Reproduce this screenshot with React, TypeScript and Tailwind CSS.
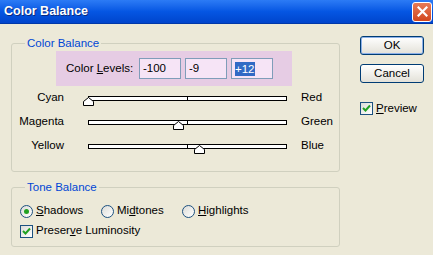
import React from "react";

const sliders = [
  { left: "Cyan", right: "Red", value: -100 },
  { left: "Magenta", right: "Green", value: -9 },
  { left: "Yellow", right: "Blue", value: 12 },
];

function Slider({ left, right, value }: { left: string; right: string; value: number }) {
  // track is 199px wide, 0 sits at the middle tick
  const pos = Math.round(((value + 100) / 200) * 198);
  return (
    <div className="flex items-center h-[24px]">
      <span className="w-[52px] text-right">{left}</span>
      <div className="relative ml-[24px] w-[199px] h-[5px] border border-black bg-white">
        <div className="absolute left-[98px] top-0 bottom-0 w-px bg-black" />
        <svg
          width="11"
          height="9"
          viewBox="0 0 11 9"
          className="absolute top-[0px]"
          style={{ left: pos - 6 }}
        >
          <polygon points="5.5,0.5 10.5,4.5 10.5,8.5 0.5,8.5 0.5,4.5" fill="#fff" stroke="#000" />
        </svg>
      </div>
      <span className="ml-[14px]">{right}</span>
    </div>
  );
}

function Field({ value, selected }: { value: string; selected?: boolean }) {
  return (
    <div className="w-[42px] h-[21px] border border-[#7F9DB9] bg-[#F6E4F6] flex items-center pl-[3px]">
      {selected ? <span className="bg-[#316AC5] text-white leading-[14px]">{value}</span> : value}
    </div>
  );
}

function Check() {
  return (
    <div className="w-[13px] h-[13px] border border-[#1C5180] bg-linear-to-br from-[#DCDCD7] to-white flex items-center justify-center">
      <svg width="9" height="9" viewBox="0 0 9 9">
        <path d="M1 4 L3.5 6.5 L8 1.5" fill="none" stroke="#21A121" strokeWidth="2" />
      </svg>
    </div>
  );
}

function Radio({ on }: { on?: boolean }) {
  return (
    <div className="w-[13px] h-[13px] rounded-full border border-[#1C5180] bg-linear-to-br from-[#DCDCD7] to-white flex items-center justify-center">
      {on && <div className="w-[5px] h-[5px] rounded-full bg-[#21A121]" />}
    </div>
  );
}

export default function App() {
  return (
    <div className="w-[433px] h-[255px] bg-[#ECE9D8] font-['Liberation_Sans',Arial,sans-serif] text-[11.5px] text-black overflow-hidden">
      {/* title bar */}
      <div className="h-[24px] flex items-center justify-between bg-linear-to-b from-[#2C7BF5] via-[#0556E3] to-[#0045CC] border-b border-[#0038A8]">
        <span className="pl-[4px] text-white font-bold text-[12.5px] [text-shadow:1px_1px_0_#0A2A80]">
          Color Balance
        </span>
        <div className="mr-[1px] w-[20px] h-[20px] rounded-[3px] border border-white bg-linear-to-b from-[#E77A55] to-[#D2461C] flex items-center justify-center">
          <svg width="11" height="11" viewBox="0 0 11 11">
            <path d="M1.5 1.5 L9.5 9.5 M9.5 1.5 L1.5 9.5" stroke="#fff" strokeWidth="2.2" strokeLinecap="square" />
          </svg>
        </div>
      </div>

      <div className="flex">
        {/* left column */}
        <div className="pl-[11px] pt-[12px] w-[340px]">
          <fieldset className="border border-[#D0D0BF] rounded-[3px] h-[136px]">
            <legend className="ml-[13px] px-[2px] text-[#0046D5] leading-[14px]">Color Balance</legend>
            <div className="ml-[44px] mt-px w-[236px] h-[35px] bg-[#E6CCE4] flex items-center pl-[10px]">
              <span className="w-[73px]">
                Color <span className="underline">L</span>evels:
              </span>
              <div className="flex gap-[4px]">
                <Field value="-100" />
                <Field value="-9" />
                <Field value="+12" selected />
              </div>
            </div>
            {sliders.map((s) => (
              <Slider key={s.left} {...s} />
            ))}
          </fieldset>

          <fieldset className="mt-[8px] border border-[#D0D0BF] rounded-[3px] h-[67px]">
            <legend className="ml-[13px] px-[2px] text-[#0046D5] leading-[14px]">Tone Balance</legend>
            <div className="flex items-center h-[20px] mt-[7px] pl-[8px]">
              <Radio on />
              <span className="ml-[3px] w-[65px]">
                <span className="underline">S</span>hadows
              </span>
              <Radio />
              <span className="ml-[3px] w-[65px]">
                Mi<span className="underline">d</span>tones
              </span>
              <Radio />
              <span className="ml-[3px]">
                <span className="underline">H</span>ighlights
              </span>
            </div>
            <div className="flex items-center h-[20px] pl-[8px]">
              <Check />
              <span className="ml-[3px]">
                Preser<span className="underline">v</span>e Luminosity
              </span>
            </div>
          </fieldset>
        </div>

        {/* right column */}
        <div className="ml-[20px] pt-[12px] flex flex-col">
          <div className="w-[64px] h-[19px] rounded-[3px] border border-[#003C74] bg-linear-to-b from-white to-[#E3E1D8] flex items-center justify-center shadow-[inset_0_0_0_1px_#8CB0E8]">
            OK
          </div>
          <div className="mt-[9px] w-[64px] h-[19px] rounded-[3px] border border-[#003C74] bg-linear-to-b from-white to-[#E3E1D8] flex items-center justify-center">
            Cancel
          </div>
          <div className="mt-[17px] flex items-center">
            <Check />
            <span className="ml-[3px]">
              <span className="underline">P</span>review
            </span>
          </div>
        </div>
      </div>
    </div>
  );
}
